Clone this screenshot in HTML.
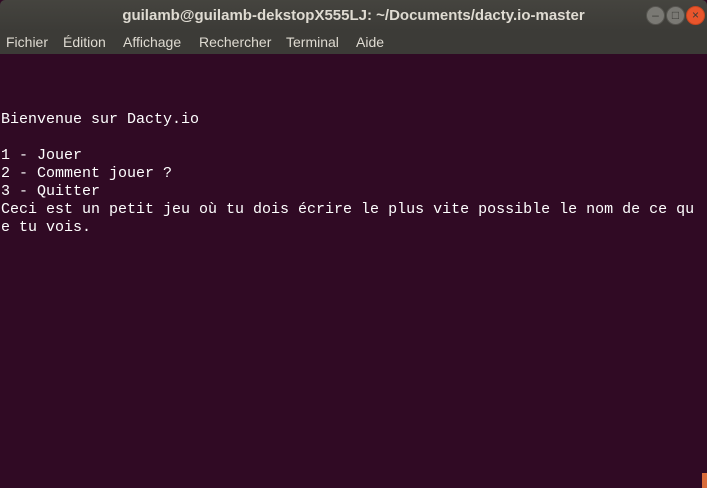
<!DOCTYPE html>
<html><head><meta charset="utf-8"><style>
body{margin:0;width:707px;height:488px;overflow:hidden;background:#300a24;font-family:"Liberation Sans","DejaVu Sans",sans-serif}
#title{position:absolute;left:0;top:0;width:707px;height:31px;background:linear-gradient(#45443f,#3c3b37);color:#dfdbd2;font-weight:bold;font-size:15px;line-height:31px;text-align:center;border-radius:5px 5px 0 0}
#menu{position:absolute;left:0;top:31px;width:707px;height:23px;background:#3c3b37;color:#dfdbd2;font-size:14px;line-height:23px}
#menu span{position:absolute;top:0}
.b{position:absolute;top:6px;width:19px;height:19px;border-radius:50%;background:#7a7974;border:1px solid #55544f;box-sizing:border-box;color:#3c3b37;font-size:12px;line-height:17px;text-align:center}
#term{position:absolute;left:1px;top:57px;color:#fff;font-family:"Liberation Mono","DejaVu Sans Mono",monospace;font-size:15px;line-height:18px;white-space:pre}
#cur{position:absolute;left:702px;top:473px;width:5px;height:15px;background:#d86b3a}
</style></head><body>
<div id="title">guilamb@guilamb-dekstopX555LJ: ~/Documents/dacty.io-master</div>
<div class="b" style="left:646px">–</div>
<div class="b" style="left:666px">□</div>
<div class="b" style="left:686px;background:#e9552c;border-color:#c7451f;color:#3c3b37">×</div>
<div id="menu"><span style="left:6px">Fichier</span><span style="left:63px">Édition</span><span style="left:123px">Affichage</span><span style="left:199px">Rechercher</span><span style="left:286px">Terminal</span><span style="left:356px">Aide</span></div>
<div id="term">


Bienvenue sur Dacty.io

1 - Jouer
2 - Comment jouer ?
3 - Quitter
Ceci est un petit jeu où tu dois écrire le plus vite possible le nom de ce qu
e tu vois.</div>
<div id="cur"></div>
</body></html>
